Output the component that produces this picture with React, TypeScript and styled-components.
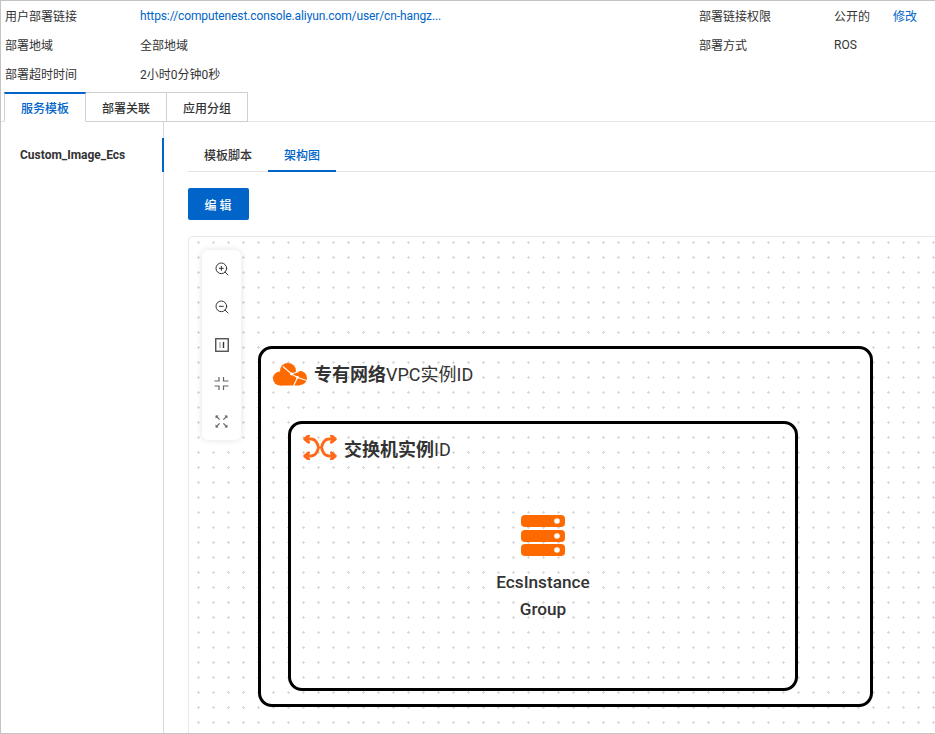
import React from 'react';
import styled, { createGlobalStyle } from 'styled-components';
import { ZoomIn, ZoomOut } from 'lucide-react';

const GlobalStyle = createGlobalStyle`
  html, body {
    margin: 0;
    padding: 0;
    background: #fff;
  }
  * {
    box-sizing: border-box;
  }
  body {
    font-family: Roboto, "Noto Sans CJK SC", sans-serif;
    font-size: 12px;
    color: #333;
  }
`;

const Page = styled.div`
  width: 935px;
  height: 734px;
  overflow: hidden;
  display: flex;
  flex-direction: column;
  border: 1px solid #c4c4c4;
  border-right: none;
`;

const InfoGrid = styled.div`
  display: grid;
  grid-template-columns: 135px 559px 135px 59px 1fr;
  grid-auto-rows: 29px;
  padding: 0 0 4px 4px;
  align-items: center;
`;

const InfoText = styled.span`
  font-size: 12px;
  color: #333;
  white-space: nowrap;
`;

const InfoLink = styled.a`
  font-size: 12px;
  color: #0064c8;
  white-space: nowrap;
`;

const UrlLink = styled(InfoLink)`
  letter-spacing: -0.11px;
`;

const Tabs = styled.div`
  display: flex;
  height: 30px;
  padding-left: 3px;
  border-bottom: 1px solid #e3e3e3;
  flex-shrink: 0;
`;

const Tab = styled.div<{ $active?: boolean }>`
  width: ${props => (props.$active ? '82px' : '81px')};
  height: 30px;
  display: flex;
  align-items: center;
  justify-content: center;
  font-size: 12px;
  font-weight: 500;
  color: ${props => (props.$active ? '#0064c8' : '#333')};
  background: #fff;
  border: 1px solid #d0d0d0;
  border-left: ${props => (props.$active ? '1px solid #d0d0d0' : 'none')};
  border-top: ${props => (props.$active ? '2px solid #0064c8' : '1px solid #d0d0d0')};
  border-bottom: ${props => (props.$active ? '1px solid #fff' : '1px solid #d0d0d0')};
`;

const Body = styled.div`
  flex: 1;
  display: flex;
  min-height: 0;
`;

const Sidebar = styled.div`
  width: 163px;
  flex-shrink: 0;
  padding-top: 16px;
  border-right: 1px solid #d8d8d8;
`;

const SideItem = styled.div`
  height: 34px;
  margin-right: -1px;
  padding-left: 19px;
  display: flex;
  align-items: center;
  font-size: 12px;
  font-weight: 700;
  color: #333;
  border-right: 2px solid #0064c8;
`;

const Content = styled.div`
  flex: 1;
  min-width: 0;
  padding: 16px 0 0 24px;
  display: flex;
  flex-direction: column;
`;

const SubTabs = styled.div`
  display: flex;
  height: 34px;
  border-bottom: 1px solid #e3e3e3;
  flex-shrink: 0;
`;

const SubTab = styled.div<{ $active?: boolean }>`
  padding: 0 16px;
  height: 34px;
  display: flex;
  align-items: center;
  font-size: 12px;
  font-weight: 500;
  color: ${props => (props.$active ? '#0064c8' : '#333')};
  border-bottom: 2px solid ${props => (props.$active ? '#0064c8' : 'transparent')};
`;

const EditButton = styled.button`
  width: 61px;
  height: 32px;
  margin: 16px 0;
  flex-shrink: 0;
  border: none;
  border-radius: 2px;
  background: #0064c8;
  color: #fff;
  font-family: inherit;
  font-size: 12px;
  font-weight: 500;
  letter-spacing: 3px;
  padding-left: 8px;
`;

const Canvas = styled.div`
  position: relative;
  flex: 1;
  margin: 0 -20px -20px 0;
  border: 1px solid #e8e8e8;
  border-radius: 4px;
  background-color: #fff;
  background-image: radial-gradient(circle, #d8d8d8 1px, transparent 1.2px);
  background-size: 15px 15px;
  background-position: 2px -2px;
`;

const Toolbar = styled.div`
  position: absolute;
  left: 13px;
  top: 13px;
  width: 39px;
  height: 190px;
  display: flex;
  flex-direction: column;
  align-items: center;
  justify-content: space-between;
  padding: 11px 0;
  background: #fff;
  border-radius: 6px;
  box-shadow: 0 0 6px rgba(0, 0, 0, 0.12);
  color: #333;
`;

const ToolIcon = styled.div`
  width: 16px;
  height: 16px;
  display: flex;
  align-items: center;
  justify-content: center;
`;

const GroupBox = styled.div<{ $left: number; $top: number; $width: number; $height: number }>`
  position: absolute;
  left: ${props => props.$left}px;
  top: ${props => props.$top}px;
  width: ${props => props.$width}px;
  height: ${props => props.$height}px;
  border: 3px solid #000;
  border-radius: 14px;
`;

const GroupTitle = styled.div<{ $left: number; $top: number }>`
  position: absolute;
  left: ${props => props.$left}px;
  top: ${props => props.$top}px;
  display: flex;
  align-items: center;
  gap: 7px;
  font-size: 18px;
  font-weight: 400;
  line-height: 24px;
  color: #333;
  white-space: nowrap;
`;

const TitleStrong = styled.b`
  font-weight: 700;
`;

const GroupIcon = styled.div<{ $shift: number }>`
  display: flex;
  margin-top: ${props => props.$shift}px;
`;

const InstanceNode = styled.div`
  position: absolute;
  left: 257px;
  top: 278px;
  width: 194px;
  display: flex;
  flex-direction: column;
  align-items: center;
`;

const InstanceLabel = styled.div`
  margin-top: 12px;
  font-size: 17.2px;
  font-weight: 500;
  line-height: 27px;
  color: #333;
  text-align: center;
`;

const FitIcon = () => (
  <svg width="14" height="14" viewBox="0 0 14 14" fill="none">
    <rect x="0.75" y="0.75" width="12.5" height="12.5" stroke="#444" strokeWidth="1.3" />
    <path d="M5 4v6" stroke="#999" strokeWidth="1.2" />
    <path d="M8.5 4v6" stroke="#333" strokeWidth="1.4" />
  </svg>
);

const ShrinkIcon = () => (
  <svg width="15" height="15" viewBox="0 0 15 15" fill="none" stroke="#666" strokeWidth="1.2">
    <path d="M0.5 5H5V1M9.5 1V5H14.5M0.5 10H5V14M9.5 14V10H14.5" />
  </svg>
);

const ExpandIcon = () => (
  <svg width="13" height="13" viewBox="0 0 13 13" fill="none" stroke="#666" strokeWidth="1.2">
    <path d="M1 1L4.6 4.6M12 1L8.4 4.6M1 12L4.6 8.4M12 12L8.4 8.4" />
    <path d="M0.6 0.6H3.6L0.6 3.6ZM12.4 0.6H9.4L12.4 3.6ZM0.6 12.4H3.6L0.6 9.4ZM12.4 12.4H9.4L12.4 9.4Z" fill="#666" stroke="none" />
  </svg>
);

const CloudIcon = () => (
  <svg width="34" height="23" viewBox="0 0 34 23">
    <g fill="#ff6a00">
      <circle cx="7" cy="15.5" r="7" />
      <circle cx="15" cy="8" r="8" />
      <circle cx="27" cy="15" r="7" />
      <rect x="7" y="12" width="20" height="10.5" />
    </g>
    <path d="M10 3.5L18.5 11L26 8.5M18.5 11L24.5 14.5L20.5 23M24.5 14.5L34 17.5" fill="none" stroke="#fff" strokeWidth="1.1" />
    <circle cx="18.5" cy="11" r="1.4" fill="#fff" />
    <circle cx="24.5" cy="14.5" r="1.4" fill="#fff" />
  </svg>
);

const SwitchIcon = () => (
  <svg width="34" height="25" viewBox="0 0 34 25" fill="none" stroke="#ff6a1a" strokeWidth="3">
    <path d="M3 4H8C12 4 14.5 8 15.5 12.5C14.5 17 12 21 8 21H3M31 4H26C22 4 19.5 8 18.5 12.5C19.5 17 22 21 26 21H31" />
    <path d="M5.5 0.8L1.8 4L5.5 7.2M5.5 17.8L1.8 21L5.5 24.2M28.5 0.8L32.2 4L28.5 7.2M28.5 17.8L32.2 21L28.5 24.2" strokeLinecap="round" strokeLinejoin="round" />
  </svg>
);

const ServerIcon = () => (
  <svg width="44" height="42" viewBox="0 0 44 42">
    <rect x="0" y="0" width="44" height="12" rx="4" fill="#ff6a00" />
    <rect x="0" y="15" width="44" height="12" rx="4" fill="#ff6a00" />
    <rect x="0" y="29" width="44" height="12" rx="4" fill="#ff6a00" />
    <circle cx="36" cy="6" r="2.8" fill="#fff" />
    <circle cx="36" cy="21" r="2.8" fill="#fff" />
    <circle cx="36" cy="35" r="2.8" fill="#fff" />
  </svg>
);

const App = () => {
  return (
    <Page>
      <GlobalStyle />
      <InfoGrid>
        <InfoText>用户部署链接</InfoText>
        <UrlLink>https://computenest.console.aliyun.com/user/cn-hangz...</UrlLink>
        <InfoText>部署链接权限</InfoText>
        <InfoText>公开的</InfoText>
        <InfoLink>修改</InfoLink>
        <InfoText>部署地域</InfoText>
        <InfoText>全部地域</InfoText>
        <InfoText>部署方式</InfoText>
        <InfoText>ROS</InfoText>
        <span />
        <InfoText>部署超时时间</InfoText>
        <InfoText>2小时0分钟0秒</InfoText>
      </InfoGrid>

      <Tabs>
        <Tab $active>服务模板</Tab>
        <Tab>部署关联</Tab>
        <Tab>应用分组</Tab>
      </Tabs>

      <Body>
        <Sidebar>
          <SideItem>Custom_Image_Ecs</SideItem>
        </Sidebar>
        <Content>
          <SubTabs>
            <SubTab>模板脚本</SubTab>
            <SubTab $active>架构图</SubTab>
          </SubTabs>
          <EditButton>编辑</EditButton>
          <Canvas>
            <Toolbar>
              <ToolIcon><ZoomIn size={16} strokeWidth={1.5} /></ToolIcon>
              <ToolIcon><ZoomOut size={16} strokeWidth={1.5} /></ToolIcon>
              <ToolIcon><FitIcon /></ToolIcon>
              <ToolIcon><ShrinkIcon /></ToolIcon>
              <ToolIcon><ExpandIcon /></ToolIcon>
            </Toolbar>
            <GroupBox $left={69} $top={109} $width={615} $height={361} />
            <GroupTitle $left={84} $top={126}>
              <GroupIcon $shift={-1}><CloudIcon /></GroupIcon>
              <span><TitleStrong>专有网络</TitleStrong>VPC实例ID</span>
            </GroupTitle>
            <GroupBox $left={99} $top={184} $width={510} $height={270} />
            <GroupTitle $left={114} $top={201}>
              <GroupIcon $shift={-5}><SwitchIcon /></GroupIcon>
              <span><TitleStrong>交换机实例</TitleStrong>ID</span>
            </GroupTitle>
            <InstanceNode>
              <ServerIcon />
              <InstanceLabel>EcsInstance<br />Group</InstanceLabel>
            </InstanceNode>
          </Canvas>
        </Content>
      </Body>
    </Page>
  );
};

export default App;
